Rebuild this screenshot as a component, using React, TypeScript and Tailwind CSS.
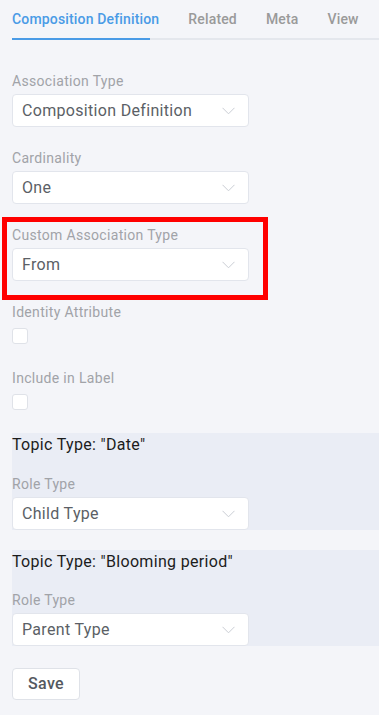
import React from 'react'

function Chevron() {
  return (
    <svg width="13" height="8" viewBox="0 0 13 8" fill="none" className="shrink-0">
      <polyline points="0.5,0.8 6.5,6.8 12.5,0.8" stroke="#c9cdd4" strokeWidth="1" />
    </svg>
  )
}

function Select({ value }: { value: string }) {
  return (
    <div className="w-[237px] h-[33px] bg-white border border-[#e2e5ec] rounded-[4px] pl-[9px] pr-[13px] flex items-center justify-between">
      <span className="text-[16px] text-[#5b5f66]">{value}</span>
      <Chevron />
    </div>
  )
}

function Label({ children }: { children: React.ReactNode }) {
  return <div className="h-5 leading-5 text-[14px] text-[#a1a3a8] mb-[3px]">{children}</div>
}

function Checkbox() {
  return <div className="w-4 h-4 bg-white border border-[#dfe2e8] rounded-[3px]" />
}

export default function App() {
  const tabs = ['Related', 'Meta', 'View']

  return (
    <div className="min-h-screen bg-[#f4f5f9] font-['Roboto','Liberation_Sans',sans-serif] tracking-[0.02em] w-[379px]">
      {/* Tabs */}
      <div className="ml-3 h-10 border-b-2 border-[#e4e7ed] flex items-center gap-[29px] tracking-[0.01em] relative">
        <div className="relative h-full flex items-center">
          <span className="text-[14px] font-medium text-[#4a9be6]">Composition Definition</span>
          <div className="absolute left-0 -bottom-[2px] w-[138px] h-[2px] bg-[#4a9be6]" />
        </div>
        {tabs.map(t => (
          <span key={t} className="text-[14px] font-medium text-[#9a9a9a]">{t}</span>
        ))}
      </div>

      <div className="pl-3 pt-[31px]">
        <div className="mb-[21px]">
          <Label>Association Type</Label>
          <Select value="Composition Definition" />
        </div>

        <div className="mb-[21px]">
          <Label>Cardinality</Label>
          <Select value="One" />
        </div>

        <div className="mb-[21px] relative w-[237px]">
          <Label>Custom Association Type</Label>
          <Select value="From" />
          <div className="absolute left-[-10px] top-[-8px] w-[266px] h-[83px] border-[5px] border-[#ff0000] pointer-events-none" />
        </div>

        <div className="mb-6">
          <Label>Identity Attribute</Label>
          <div className="pt-[3px]">
            <Checkbox />
          </div>
        </div>

        <div className="mb-[23px]">
          <Label>Include in Label</Label>
          <div className="pt-[3px]">
            <Checkbox />
          </div>
        </div>

        {/* Topic types */}
        <div className="bg-[#eaedf5]">
          <div className="h-6 leading-6 text-[16px] text-[#1c1c1c]">Topic Type: "Date"</div>
          <div className="mt-[17px]">
            <Label>Role Type</Label>
            <Select value="Child Type" />
          </div>
        </div>

        <div className="bg-[#eaedf5] mt-5">
          <div className="h-6 leading-6 text-[16px] text-[#1c1c1c]">Topic Type: "Blooming period"</div>
          <div className="mt-4">
            <Label>Role Type</Label>
            <Select value="Parent Type" />
          </div>
        </div>

        <button className="mt-[22px] w-[68px] h-8 bg-white border border-[#dfe2e8] rounded-[4px] text-[16px] font-medium text-[#555960]">
          Save
        </button>
      </div>
    </div>
  )
}
